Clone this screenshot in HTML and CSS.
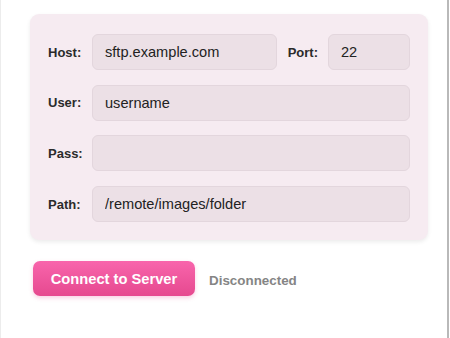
FILE: index.html
```html
<!DOCTYPE html>
<html lang="en">
<head>
    <meta charset="UTF-8">
    <meta name="viewport" content="width=device-width, initial-scale=1.0">
    <title>SFTP</title>
    <link rel="stylesheet" href="styles.css">
</head>
<body>
    <div class="panel">
        <div class="card">
            <div class="row">
                <label class="lbl">Host:</label>
                <input class="field" type="text" value="sftp.example.com">
                <label class="lbl port-lbl">Port:</label>
                <input class="field port" type="text" value="22">
            </div>
            <div class="row">
                <label class="lbl">User:</label>
                <input class="field" type="text" value="username">
            </div>
            <div class="row">
                <label class="lbl">Pass:</label>
                <input class="field" type="password" value="">
            </div>
            <div class="row">
                <label class="lbl">Path:</label>
                <input class="field" type="text" value="/remote/images/folder">
            </div>
        </div>
        <div class="actions">
            <button class="connect">Connect to Server</button>
            <span class="status">Disconnected</span>
        </div>
    </div>
</body>
</html>
```

FILE: styles.css
```css
*{
    padding: 0;
    margin: 0;
    box-sizing: border-box;
}
body{
    background-color: white;
    font-family: "Liberation Sans", Arial, sans-serif;
    width: 450px;
    height: 338px;
    overflow: hidden;
}
/* 外层面板 */
.panel{
    width: 449px;
    height: 338px;
    border-left: 1px solid #ececec;
    border-right: 2px solid #b9b9b9;
    padding: 14px 20px 0 29px;
}
/* 表单卡片 */
.card{
    width: 398px;
    background-color: #f6ebf1;
    border-radius: 9px;
    padding: 20px 18px 18px 18px;
    box-shadow: 0 2px 4px rgba(0,0,0,0.08);
    display: flex;
    flex-direction: column;
    gap: 14.7px;
}
.row{
    display: flex;
    align-items: center;
    gap: 10px;
}
.lbl{
    width: 34px;
    font-size: 13px;
    font-weight: bold;
    color: #2b2b2b;
    flex-shrink: 0;
}
.port-lbl{
    width: auto;
    margin-left: 1px;
}
.field{
    flex: 1;
    min-width: 0;
    height: 36px;
    background-color: #ece0e6;
    border: 1px solid #e3d6dd;
    border-radius: 6px;
    padding: 0 12px;
    font-family: inherit;
    font-size: 14.6px;
    color: #222;
    outline: none;
}
.field.port{
    flex: none;
    width: 82px;
}
/* 按钮区 */
.actions{
    display: flex;
    align-items: center;
    gap: 14px;
    margin-top: 21px;
    padding-left: 3px;
}
.connect{
    width: 162px;
    height: 35px;
    border: none;
    border-radius: 7px;
    background: linear-gradient(#f865ac, #e6498f);
    color: white;
    font-family: inherit;
    font-size: 14.7px;
    font-weight: bold;
    box-shadow: 0 2px 4px rgba(230,73,143,0.25);
    cursor: pointer;
}
.status{
    margin-top: 4px;
    font-size: 13.4px;
    font-weight: bold;
    color: #858585;
}
```
